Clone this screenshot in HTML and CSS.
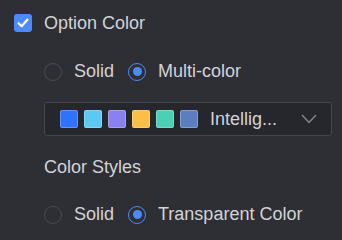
FILE: index.html
```html
<!DOCTYPE html>
<html lang="en">

<head>
    <meta charset="UTF-8">
    <meta name="viewport" content="width=device-width, initial-scale=1.0">
    <title>Option Color</title>
    <link rel="stylesheet" href="styles.css">
</head>

<body>
    <div class="panel">
        <label class="checkRow">
            <span class="checkbox">
                <svg width="14" height="14" viewBox="0 0 14 14">
                    <path d="M2.5 7.2 L5.6 10.2 L11.5 3.6" fill="none" stroke="#fff" stroke-width="2.2" stroke-linecap="round" stroke-linejoin="round" />
                </svg>
            </span>
            <span>Option Color</span>
        </label>

        <div class="sub">
            <div class="radioRow">
                <span class="radio"></span>
                <span class="radioText">Solid</span>
                <span class="radio checked"></span>
                <span class="radioText">Multi-color</span>
            </div>

            <div class="select">
                <div class="swatches">
                    <span class="swatch" style="background-color: #3071fe;"></span>
                    <span class="swatch" style="background-color: #5cc9f5;"></span>
                    <span class="swatch" style="background-color: #8a80ee;"></span>
                    <span class="swatch" style="background-color: #fbbe46;"></span>
                    <span class="swatch" style="background-color: #4bcfb5;"></span>
                    <span class="swatch" style="background-color: #5b7ec0;"></span>
                </div>
                <span class="selectText">Intellig...</span>
                <svg class="chevron" width="16" height="10" viewBox="0 0 16 10">
                    <path d="M1 1 L8 8.5 L15 1" fill="none" stroke="#85878e" stroke-width="1.4" />
                </svg>
            </div>

            <div class="title">Color Styles</div>

            <div class="radioRow last">
                <span class="radio"></span>
                <span class="radioText">Solid</span>
                <span class="radio checked"></span>
                <span class="radioText">Transparent Color</span>
            </div>
        </div>
    </div>
</body>

</html>
```

FILE: styles.css
```css
body {
    margin: 0;
    background-color: #2e2f34;
    font-family: "Liberation Sans", Arial, sans-serif;
    font-size: 18px;
    color: #d2d3d7;
}

.panel {
    padding: 14px 10px 0 14px;
}

.checkRow {
    display: flex;
    align-items: center;
    gap: 12px;
    height: 18px;
}

.checkbox {
    display: flex;
    align-items: center;
    justify-content: center;
    width: 18px;
    height: 18px;
    border-radius: 3px;
    background-color: #4c8af7;
}

.sub {
    padding-left: 30px;
}

.radioRow {
    display: flex;
    align-items: center;
    height: 19px;
    margin-top: 30px;
}

.radioRow.last {
    margin-top: 29px;
}

.radio {
    box-sizing: border-box;
    display: flex;
    align-items: center;
    justify-content: center;
    width: 18px;
    height: 18px;
    border: 1.5px solid #4a4b51;
    border-radius: 50%;
    margin-right: 12px;
}

.radio.checked {
    border-color: #4c8af7;
}

.radio.checked::after {
    content: '';
    width: 9px;
    height: 9px;
    border-radius: 50%;
    background-color: #4c8af7;
}

.radioText {
    margin-right: 14px;
}

.select {
    box-sizing: border-box;
    display: flex;
    align-items: center;
    width: 288px;
    height: 34px;
    margin-top: 21px;
    padding: 0 14px 0 15px;
    border: 1px solid #45464c;
    border-radius: 3px;
    background-color: #26272c;
}

.swatches {
    display: flex;
    gap: 6px;
}

.swatch {
    box-sizing: border-box;
    width: 18px;
    height: 18px;
    border-radius: 2px;
    border: 1px solid rgba(255, 255, 255, 0.25);
}

.selectText {
    flex: 1;
    margin-left: 12px;
}

.title {
    margin-top: 22px;
    line-height: 18px;
}
```
